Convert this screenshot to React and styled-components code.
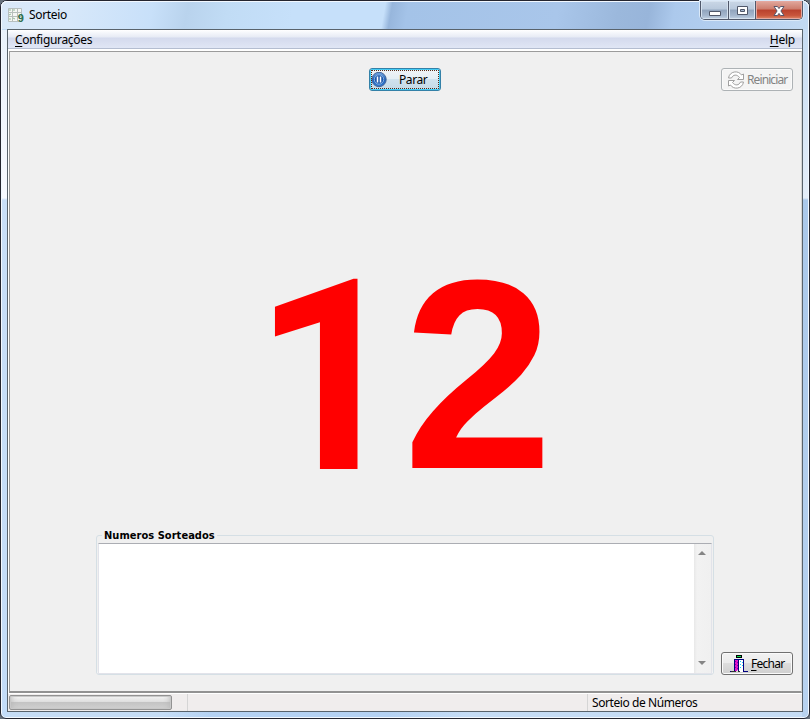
import React from "react";
import styled, { createGlobalStyle } from "styled-components";

const GlobalStyle = createGlobalStyle`
  * { box-sizing: border-box; }
  body { margin: 0; overflow: hidden; background: #66707c; }
`;

const Window = styled.main`
  width: 810px;
  height: 719px;
  display: flex;
  flex-direction: column;
  border: 1px solid #24252f;
  border-radius: 7px 7px 6px 6px;
  box-shadow: inset 0 0 0 1px #f2f8ff;
  background:
    linear-gradient(90deg, transparent 0 20%, #b5d2f3 26% 48%, transparent 58%) 0 100% / 100% 8px no-repeat,
    linear-gradient(#e9f1fb 0, #f8faff 168px, #c9dff8 170px, #c3dcf8 100%) 0 29px / 7px 100% no-repeat,
    linear-gradient(#c6dbf2 0, #e4edf8 168px, #aac8ea 170px, #b9d3f0 100%) 100% 29px / 7px 100% no-repeat,
    #c6ddf6;
  font-family: "Noto Sans", "Open Sans", sans-serif;
  font-size: 12px;
  line-height: 16px;
  letter-spacing: -0.32px;
  color: #000;
`;

const TitleBar = styled.header`
  height: 28px;
  flex: none;
  display: flex;
  align-items: flex-start;
  padding: 0 6px 0 7px;
  border-radius: 6px 6px 0 0;
  box-shadow: inset 0 1px #f2f8ff, inset 1px 0 #f2f8ff, inset -1px 0 #f2f8ff;
  background: linear-gradient(100deg,
    #d9e8f8 0, #d7e8fa 70px, #c8e0f9 150px, #b9d3ed 185px, #c1dcf5 225px,
    #c6e0fa 290px, #c6e0fa 379px, #97b6dc 386px, #a4c3e8 402px, #a9c6ea 550px,
    #9bb8dc 610px, #98b5da 640px, #acc9ec 665px, #b5d0ef 730px, #c3daf3 100%);
`;

const Title = styled.h1`
  flex: 1;
  margin: 6px 0 0 5px;
  font: inherit;
`;

const AppIcon = styled.svg`
  width: 16px;
  height: 16px;
  margin-top: 6px;
`;

const Controls = styled.div`
  display: flex;
  height: 19px;
  border: 1px solid #50586a;
  border-top: 0;
  border-radius: 0 0 5px 5px;
  overflow: hidden;
  box-shadow: 0 0 0 1px #dbe9f8;
`;

const ControlButton = styled.button`
  width: ${(p) => p.$width}px;
  padding: 0;
  border: 0;
  border-left: ${(p) => (p.$first ? "0" : "1px solid #50586a")};
  box-shadow: inset 0 0 0 1px ${(p) => (p.$danger ? "#e4a79f" : "#d6e2ef")};
  background: ${(p) =>
    p.$danger
      ? "linear-gradient(#e1a99e 0, #cd7c6d 45%, #b9412d 50%, #c8553c 80%, #df8a68)"
      : "linear-gradient(#cad7e6 0, #b9c9dc 45%, #91a4bd 50%, #a4b6cd 80%, #c1d2e4)"};
  svg { display: block; margin: 0 auto; }
`;

const Client = styled.section`
  flex: 1;
  margin: 0 6px 6px;
  min-height: 0;
  display: flex;
  flex-direction: column;
  border: 1px solid #59636c;
  background: #fff;
`;

const MenuBar = styled.nav`
  height: 19px;
  flex: none;
  display: flex;
  justify-content: space-between;
  padding: 2px 7px 0;
  border-bottom: 1px solid #b4bdd0;
  background: linear-gradient(#fff 0, #f4f6fb 3px, #e7ebf5 7px, #d4daed 8px, #e0e6f5 18px);
`;

const MenuItem = styled.span`
  height: 16px;
  letter-spacing: ${(p) => p.$tracking || "-0.32px"};
`;

const Key = styled.span`
  text-decoration: underline;
  text-underline-offset: 2px;
  text-decoration-thickness: 1px;
`;

const Panel = styled.section`
  height: 642px;
  flex: none;
  margin: 2px 0 0 1px;
  display: flex;
  flex-direction: column;
  border: 1px solid #9b9b9b;
  border-bottom: 2px solid #929292;
  border-right-color: #d5d5d5;
  background: #f0f0f0;
`;

const TopActions = styled.div`
  display: flex;
  justify-content: space-between;
  padding: 16px 8px 0 359px;
`;

const Button = styled.button`
  width: 72px;
  height: 23px;
  flex: none;
  display: flex;
  align-items: center;
  padding: 0 0 0 ${(p) => p.$inset || 5}px;
  gap: ${(p) => p.$gap || 2}px;
  font: inherit;
  line-height: 16px;
  letter-spacing: ${(p) => p.$tracking || "-0.4px"};
  white-space: nowrap;
  border: 1px solid ${(p) => (p.$active ? "#3381a8" : p.disabled ? "#adb2b5" : "#707070")};
  border-radius: 3px;
  color: ${(p) => (p.disabled ? "#838383" : "#000")};
  background: ${(p) =>
    p.disabled
      ? "#f4f4f4"
      : p.$active
      ? "linear-gradient(#f0f4f7 0, #e4eef4 49%, #d0e2ed 50%, #c4dae7)"
      : "linear-gradient(#f2f2f2 0, #ebebeb 49%, #dddddd 50%, #cfcfcf)"};
  box-shadow: inset 0 0 0 1px ${(p) => (p.$active ? "#45cdf5" : "#fafafa")};
  outline: ${(p) => (p.$active ? "1px dotted #562a16" : "none")};
  outline-offset: -3px;
  svg { flex: none; }
`;

const Display = styled.div`
  flex: 1;
  display: flex;
  align-items: flex-start;
  padding: 164px 0 0 243px;
  letter-spacing: 0;
  color: #f00;
  font-weight: 700;
`;

const Digit = styled.span`
  display: block;
  width: ${(p) => p.$width}px;
  margin-top: ${(p) => p.$top || 0}px;
  font-family: ${(p) => p.$face}, sans-serif;
  font-size: ${(p) => p.$size}px;
  line-height: 240px;
`;

const BottomArea = styled.div`
  display: flex;
  align-items: flex-end;
  justify-content: space-between;
  padding: 0 8px 16px 86px;
`;

const Group = styled.fieldset`
  width: 618px;
  height: 147px;
  min-width: 0;
  margin: 0;
  padding: 0 1px 1px;
  border: 1px solid #d5dfe5;
  border-radius: 3px;
  box-shadow: inset 0 -1px #fff;
`;

const Legend = styled.legend`
  height: 14px;
  margin-left: 4px;
  padding: 0 2px;
  font: 700 11px/16px "DejaVu Sans Condensed", "DejaVu Sans", sans-serif;
  font-stretch: condensed;
  letter-spacing: 0.04px;
`;

const List = styled.div`
  height: 131px;
  margin-top: 1px;
  display: flex;
  justify-content: flex-end;
  border: 1px solid #e2e3ea;
  border-top-color: #abadb3;
  background: #fff;
`;

const ScrollBar = styled.div`
  width: 17px;
  display: flex;
  flex-direction: column;
  align-items: center;
  justify-content: space-between;
  padding: 7px 2px 8px 0;
  background: linear-gradient(90deg, #e8e8e8, #f2f2f2 3px, #f0f0f0);
`;

const StatusBar = styled.footer`
  flex: 1;
  display: flex;
  padding-left: 1px;
  border-top: 1px solid #fff;
  background: #f0eded;
`;

const StatusCell = styled.div`
  width: ${(p) => p.$width};
  flex: ${(p) => (p.$width ? "none" : 1)};
  padding: ${(p) => p.$pad || "0"};
  letter-spacing: -0.42px;
  border-right: ${(p) => (p.$width ? "1px solid #d5d5d5" : "0")};
`;

const Progress = styled.div`
  width: 163px;
  height: 15px;
  border: 1px solid #929292;
  border-radius: 2px;
  box-shadow: inset 0 0 0 1px #c8c8c8, inset 8px 0 6px -7px #b4b4b4, inset -8px 0 6px -7px #b4b4b4;
  background: linear-gradient(#f4f4f4 0, #dedede 45%, #c4c4c4 50%, #d0d0d0 100%);
`;

function CalendarIcon() {
  return (
    <AppIcon viewBox="0 0 16 16">
      <path d="M.5 1.5h13v13H.5z" fill="#f5f6f4" stroke="#b7bfc0" />
      <path d="M4.5 1v13M9.5 1v13M0 5.5h13M0 9.5h13" stroke="#b7bfbb" />
      <path d="M1 3h2M5 3h2M1 8l2-1M1 12h2M5 11l2 1" stroke="#8fbc98" />
      <text x="9.8" y="15" fontFamily="Liberation Sans, sans-serif" fontWeight="700" fontSize="11" fill="#2d704d">9</text>
    </AppIcon>
  );
}

function PauseIcon() {
  return (
    <svg width="16" height="16" viewBox="0 0 16 16">
      <defs>
        <linearGradient id="pause" x2="0" y2="1">
          <stop stopColor="#75a8e2" />
          <stop offset=".5" stopColor="#2163b9" />
          <stop offset="1" stopColor="#347cd0" />
        </linearGradient>
      </defs>
      <circle cx="8" cy="7.5" r="7.2" fill="url(#pause)" stroke="#456597" />
      <circle cx="8" cy="7.5" r="4.7" fill="#1d57aa" stroke="#82afe2" />
      <path d="M6.5 4.5v6M9.5 4.5v6" stroke="#fff" strokeWidth="1.5" />
    </svg>
  );
}

function RefreshIcon() {
  return (
    <svg width="18" height="18" viewBox="0 0 18 18" fill="#fff" stroke="#a0a0a0" strokeLinejoin="round">
      <path d="M1.5 7C2.5 0 11.5-1 14.5 4l2-1v5.5h-6l2-2C10 3 6 3.5 4.5 7z" />
      <path d="M16.5 11C15.5 18 6.5 19 3.5 14l-2 1V9.5h6l-2 2C8 15 12 14.5 13.5 11z" />
    </svg>
  );
}

function DoorIcon() {
  return (
    <svg width="18" height="18" viewBox="0 0 18 18" shapeRendering="crispEdges">
      <path d="M6 0h6v3H6z" fill="#000" />
      <path d="M7 1h4v1H7z" fill="#00e650" />
      <path d="M4 4h10v12h4v1h-5V5H5v12H0v-1h4z" fill="#000080" />
      <path d="M5 5h3v10l-3 2z" fill="#e010c8" />
      <path d="M5 6h1v1H5zm2 1h1v1H7zM5 9h1v1H5zm2 1h1v1H7zm-2 2h1v1H5zm2 1h1v1H7z" fill="#8000a0" />
      <path d="M8 5h1v11H8z" fill="#000080" />
      <path d="M9 5h4v12H9z" fill="#fff" />
      <path d="M10 6h1v1h-1zm2 1h1v1h-1zm-2 2h1v1h-1zm2 1h1v1h-1zm-2 2h1v1h-1z" fill="#20cfff" />
      <path d="M1 16h5v1H1zm7 0h2v1H8z" fill="#333" />
    </svg>
  );
}

function Arrow({ down }) {
  return (
    <svg width="8" height="4" viewBox="0 0 8 4">
      <path d={down ? "M0 0h8L4 4z" : "M0 4h8L4 0z"} fill="#858585" />
    </svg>
  );
}

export default function App() {
  return (
    <>
      <GlobalStyle />
      <Window>
        <TitleBar>
          <CalendarIcon />
          <Title>Sorteio</Title>
          <Controls>
            <ControlButton $width={27} $first aria-label="Minimizar">
              <svg width="14" height="14" viewBox="0 0 14 14"><path d="M1.5 8.5h11v4h-11z" fill="#fff" stroke="#50586a" /></svg>
            </ControlButton>
            <ControlButton $width={27} aria-label="Maximizar">
              <svg width="13" height="14" viewBox="0 0 13 14"><path d="M1.5 3.5h10v8h-10z" fill="#fff" stroke="#50586a" /><path d="M4.5 6.5h4v2h-4z" fill="#a6b8d0" stroke="#50586a" /></svg>
            </ControlButton>
            <ControlButton $width={47} $danger aria-label="Fechar janela">
              <svg width="14" height="14" viewBox="0 0 14 14"><path d="M2 3.5h3.5L7 5.6l1.5-2.1H12L8.9 8l3.1 4.5H8.5L7 10.4l-1.5 2.1H2L5.1 8z" fill="#fff" stroke="#59566a" /></svg>
            </ControlButton>
          </Controls>
        </TitleBar>
        <Client>
          <MenuBar>
            <MenuItem><Key>C</Key>onfigurações</MenuItem>
            <MenuItem $tracking="-0.25px"><Key>H</Key>elp</MenuItem>
          </MenuBar>
          <Panel>
            <TopActions>
              <Button $active $inset={1} $gap={12}><PauseIcon />Parar</Button>
              <Button disabled $gap={2} $tracking="-0.9px"><RefreshIcon />Reiniciar</Button>
            </TopActions>
            <Display>
              <Digit $face="Roboto" $size={267} $width={150} $top={3}>1</Digit>
              <Digit $face='"Liberation Sans"' $size={270} $width={151}>2</Digit>
            </Display>
            <BottomArea>
              <Group>
                <Legend>Numeros Sorteados</Legend>
                <List><ScrollBar><Arrow /><Arrow down /></ScrollBar></List>
              </Group>
              <Button $inset={8} $gap={3} $tracking="-0.75px"><DoorIcon /><span><Key>F</Key>echar</span></Button>
            </BottomArea>
          </Panel>
          <StatusBar>
            <StatusCell $width="179px" $pad="1px 0 0"><Progress /></StatusCell>
            <StatusCell $width="400px" />
            <StatusCell $pad="1px 0 0 4px">Sorteio de Números</StatusCell>
          </StatusBar>
        </Client>
      </Window>
    </>
  );
}
